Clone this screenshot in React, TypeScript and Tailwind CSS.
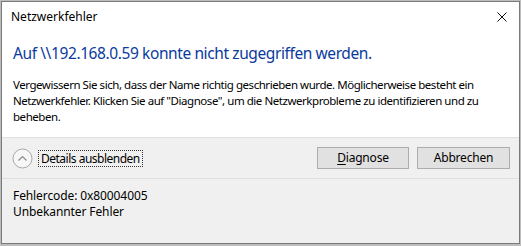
export default function App() {
  const font = { fontFamily: '"Noto Sans", "Open Sans", sans-serif' };
  return (
    <div className="w-[521px] h-[246px] bg-[#bdbdbd] pl-[1px] pt-[1px]" style={font}>
      <div className="w-[519px] h-[243px] flex flex-col overflow-hidden border border-[#7a7a7a] bg-white text-black text-[12px]">
        {/* title bar */}
        <div className="h-[30px] shrink-0 flex items-center justify-between pl-[9px] pr-[9px]">
          <span className="leading-[16px]">Netzwerkfehler</span>
          <svg width="10" height="10" viewBox="0 0 10 10" className="mr-[3px]">
            <path d="M0.5 0.5 L9.5 9.5 M9.5 0.5 L0.5 9.5" stroke="#111" strokeWidth="1" />
          </svg>
        </div>

        {/* main instruction + content */}
        <div className="shrink-0 pl-[11px] pr-[10px] pt-[10px] pb-[12px] whitespace-nowrap">
          <h1 className="text-[15.5px] leading-[22px] text-[#0a3a9e] tracking-[-0.4px]">
            Auf \\192.168.0.59 konnte nicht zugegriffen werden.
          </h1>
          <p className="mt-[13px] text-[11.5px] leading-[16px] tracking-[-0.45px]">
            Vergewissern Sie sich, dass der Name richtig geschrieben wurde. Möglicherweise besteht ein
            <br />
            Netzwerkfehler. Klicken Sie auf "Diagnose", um die Netzwerkprobleme zu identifizieren und zu
            <br />
            beheben.
          </p>
        </div>

        {/* footer */}
        <div className="flex-1 flex flex-col bg-[#f0f0f0] border-t border-[#dfdfdf]">
          <div className="h-[41px] shrink-0 flex items-center pl-[10px] pr-[9px] border-b border-[#dfdfdf]">
            <svg width="21" height="21" viewBox="0 0 21 21">
              <circle cx="10.5" cy="10.5" r="9.5" fill="#f7f7f7" stroke="#a9a9a9" strokeWidth="1" />
              <path d="M6.5 12.5 L10.5 8.5 L14.5 12.5" fill="none" stroke="#8c8c8c" strokeWidth="1.2" />
            </svg>
            <span className="ml-[5px] px-[2px] leading-[15px] tracking-[-0.5px] border border-dotted border-[#333] whitespace-nowrap">
              Details ausblenden
            </span>
            <div className="flex-1" />
            <button className="w-[92px] h-[22px] bg-[#e1e1e1] border border-[#adadad] leading-[16px] tracking-[-0.2px]">
              <span className="underline underline-offset-2">D</span>iagnose
            </button>
            <button className="ml-[8px] w-[93px] h-[22px] bg-[#e1e1e1] border border-[#adadad] leading-[16px] tracking-[-0.2px]">
              Abbrechen
            </button>
          </div>
          <div className="pl-[11px] pt-[9px] text-[12px] leading-[16px] tracking-[-0.1px] whitespace-nowrap">
            <div>Fehlercode: 0x80004005</div>
            <div>Unbekannter Fehler</div>
          </div>
        </div>
      </div>
    </div>
  );
}
